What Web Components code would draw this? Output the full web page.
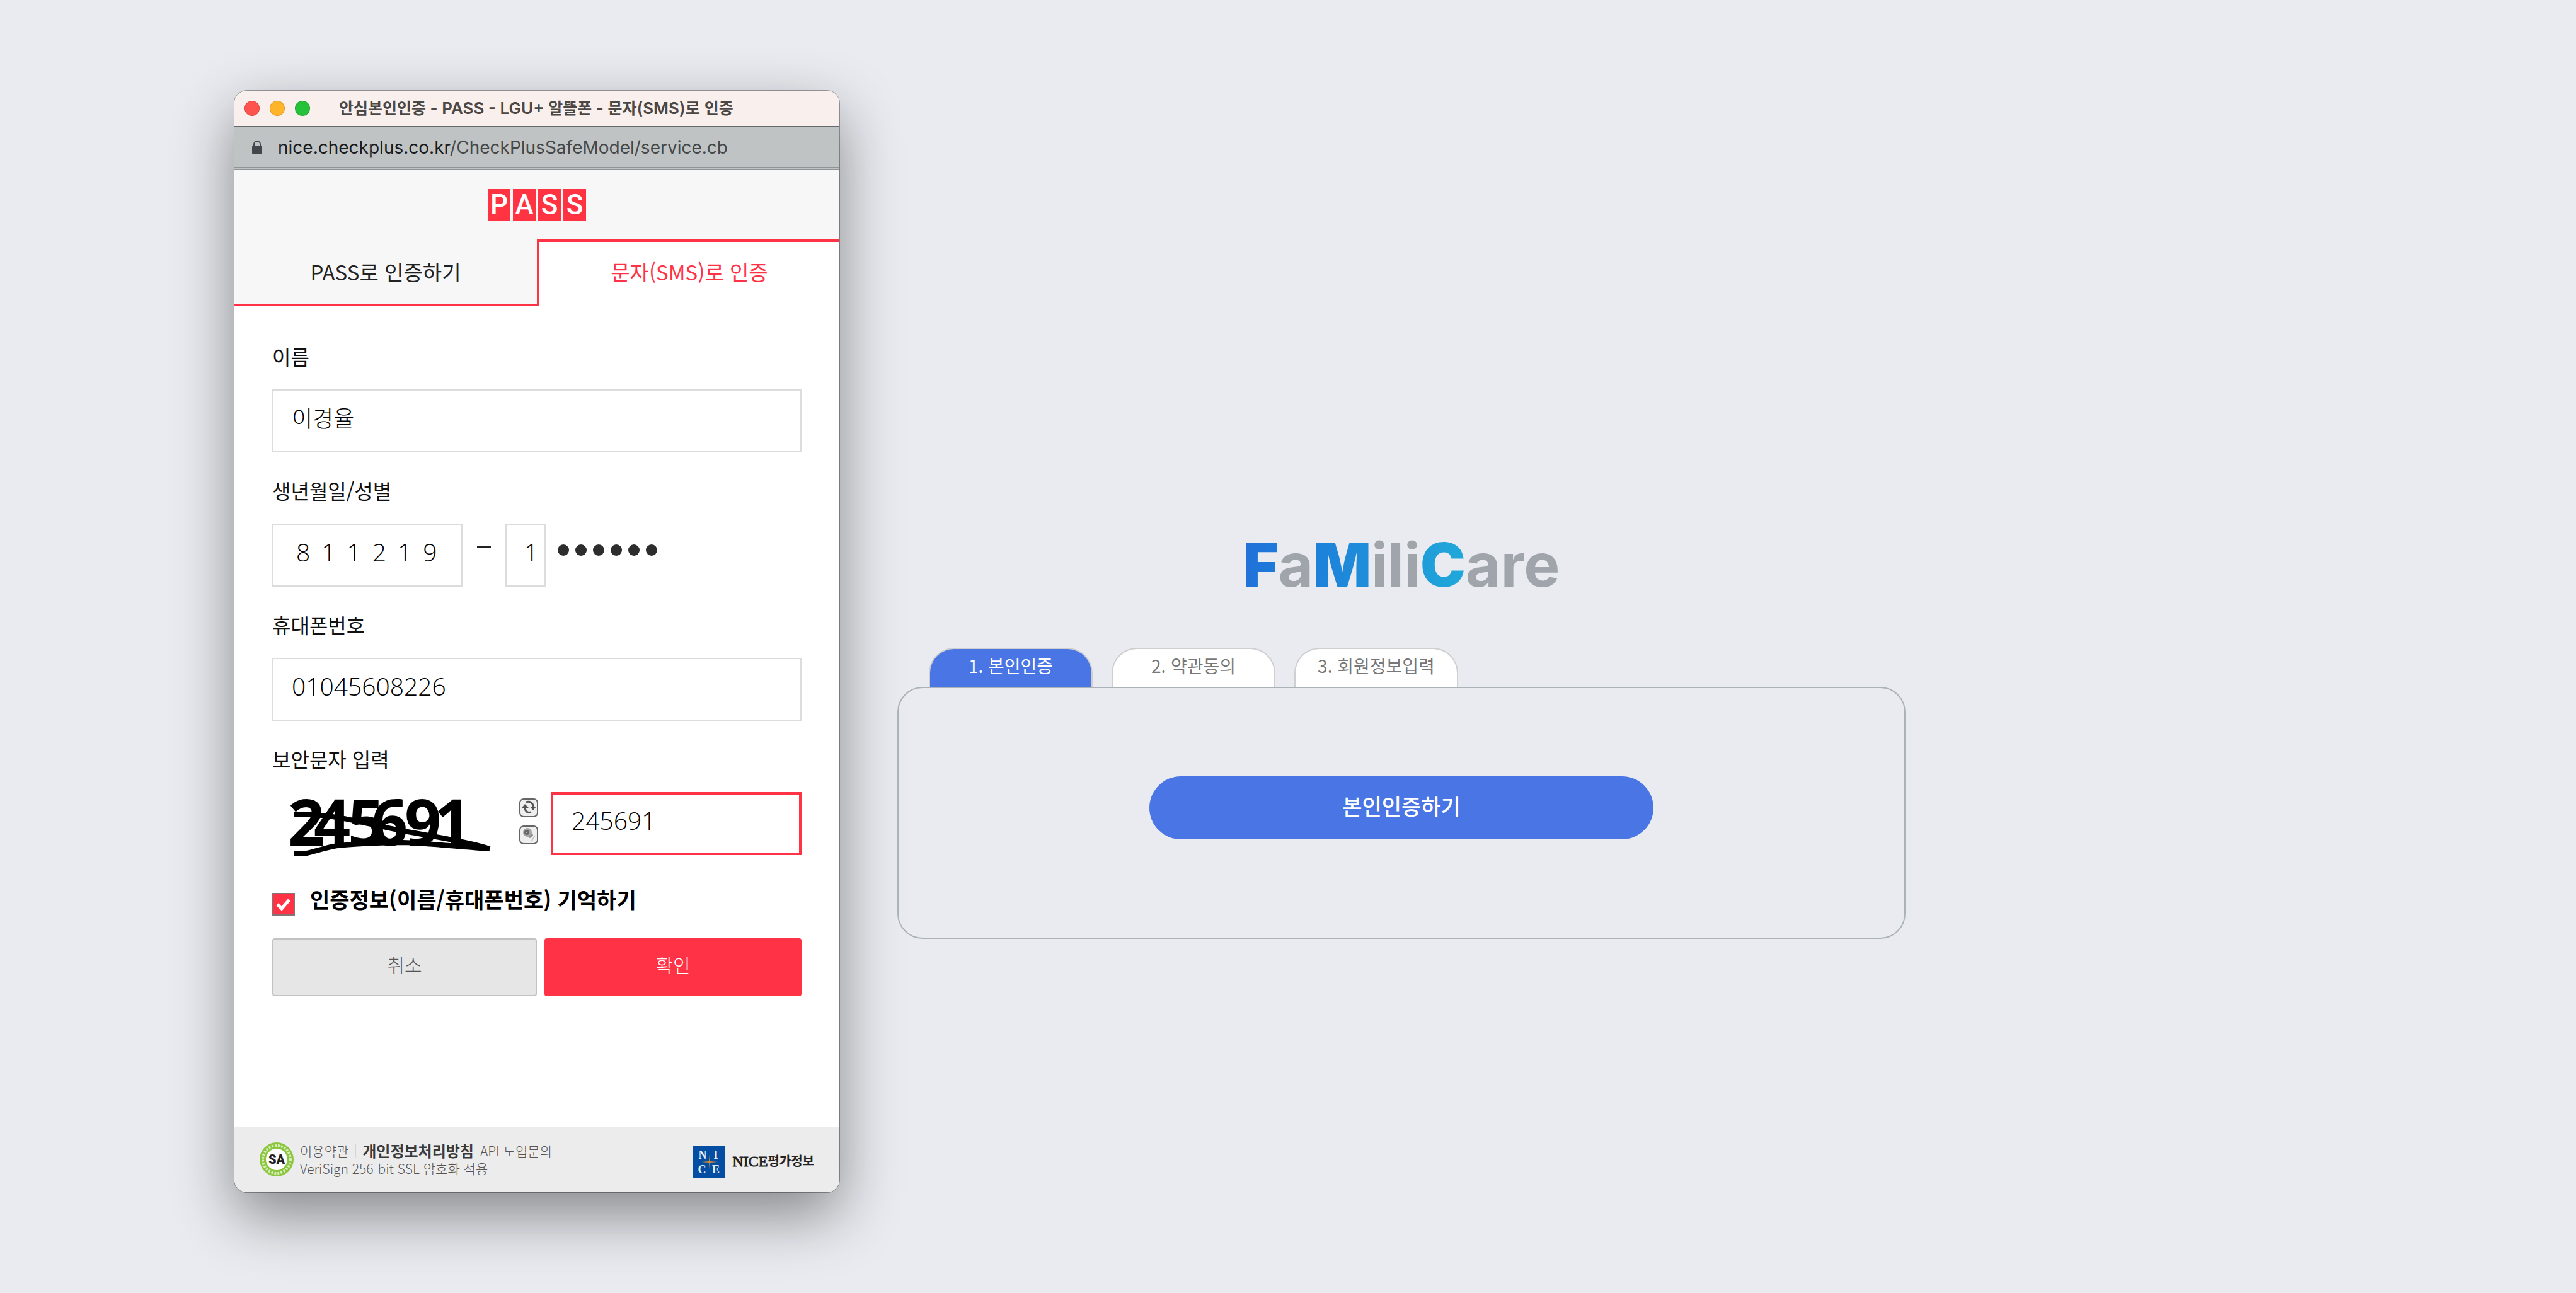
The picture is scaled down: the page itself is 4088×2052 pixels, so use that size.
<!DOCTYPE html>
<html lang="ko">
<head>
<meta charset="utf-8">
<title>FaMiliCare 본인인증</title>
<style>
html,body{margin:0;min-height:100vh}
body{background:#e9ebf0;font-family:"Noto Sans CJK KR","Noto Sans",sans-serif;color:#111;display:flex;flex-direction:column;overflow-x:hidden}
</style>
</head>
<body>
<sign-up-desk></sign-up-desk>
<script>
const define=(name,markup)=>{
  const t=document.createElement('template');
  t.innerHTML=markup;
  customElements.define(name,class extends HTMLElement{
    constructor(){super();this.attachShadow({mode:'open'}).append(t.content.cloneNode(true));}
  });
};

define('traffic-lights',`
<style>
:host{display:flex;gap:16px}
i{width:24px;height:24px;border-radius:50%;box-sizing:border-box;border:1px solid #0002;background:#ff544d}
i:nth-of-type(2){background:#ffb429}
i:nth-of-type(3){background:#25c138}
</style><i></i><i></i><i></i>`);

define('pass-logo',`
<style>
:host{display:flex;gap:4px}
span{width:36px;height:50px;background:#ff3342;color:#fff;text-align:center;font:500 44px/50px Roboto,"Liberation Sans",sans-serif}
</style>
<span>P</span><span>A</span><span>S</span><span>S</span>`);

define('captcha-image',`
<style>:host{display:block}svg{display:block;width:330px;height:90px;overflow:visible}</style>
<svg viewBox="0 0 330 90">
<text font-family="Open Sans,Noto Sans" font-weight="700" font-size="102" x="-2 39 93 130 183 230" y="75">245691</text>
<path d="M8 26C40 25 60 27 81 31C110 36 150 46 188 53S290 70 318 80" fill="none" stroke="#000" stroke-width="8"/>
<path d="M8 87H28C40 84 60 78 71 76C90 73 150 70 181 70C220 71 280 78 318 80" fill="none" stroke="#000" stroke-width="8"/>
</svg>`);

define('captcha-tools',`
<style>
:host{display:flex;flex-direction:column;gap:13px}
button{all:unset;display:block;width:30px;height:30px}
svg{display:block;width:30px;height:30px}
</style>
<button aria-label="새로고침"><svg viewBox="0 0 30 30"><rect x="1" y="1" width="28" height="28" rx="6" fill="#eee" stroke="#666" stroke-width="2"/>
<path d="M11 6C17 4 22 7 22 13M19 22C13 24 9 20 9 14" fill="none" stroke="#555" stroke-width="3"/><path d="M17 13h10l-5 6zM4 15l5-6 6 6z" fill="#555"/></svg></button>
<button aria-label="음성듣기"><svg viewBox="0 0 30 30"><rect x="1" y="1" width="28" height="28" rx="6" fill="#eee" stroke="#666" stroke-width="2"/>
<path d="M12 18q8 0 8-9l2 7-5 4z" fill="#888"/><ellipse cx="13" cy="11" rx="7" ry="7" fill="#a5a5a5"/><circle cx="12" cy="11" r="4" fill="#666"/><circle cx="12" cy="11" r="1" fill="#ddd"/><path d="M19 25l6-9" stroke="#c4cbc4" stroke-width="2"/></svg></button>`);

define('auth-tabs',`
<style>
:host{display:flex;font-size:33px;line-height:48px}
button{all:unset;box-sizing:border-box;flex:1;height:106px;text-align:center}
.off{border-bottom:4px solid #ff3345;flex:0 0 50%;color:#222}
.on{background:#fff;color:#ff3345;border-top:4px solid #ff3345;border-left:4px solid #ff3345;padding-bottom:8px}
</style>
<button class="off">PASS로 인증하기</button><button class="on">문자(SMS)로 인증</button>`);

define('auth-form',`
<style>
:host{display:block;background:#fff;padding:55px 60px 207px}
form{display:flex;flex-direction:column;gap:36px}
.field{display:flex;flex-direction:column;gap:29px}
label{font-size:32px;line-height:48px;color:#111}
input:not([type=checkbox]){box-sizing:border-box;width:100%;height:100px;margin:0;border:2px solid #dcdcdc;border-radius:0;background:#fff;padding:0 29px 12px;font:300 39px "Open Sans","Noto Sans",sans-serif;color:#000;outline:none;min-width:0}
input#name{font:300 36px "Noto Sans CJK KR",sans-serif}
.row{display:flex;align-items:flex-start}
input#birth{width:302px;padding-left:36px;padding-right:0;letter-spacing:18px}
input#sex{width:64px;padding-left:28px;padding-right:0}
.dash{width:22px;height:3px;background:#222;margin:36px 23px 0}
.dots{display:flex;gap:10px;padding:33px 0 0 19px}
.dots i{width:18px;height:18px;border-radius:50%;background:#2d2d2d}
captcha-image{margin:10px 0 0 27px}
captcha-tools{margin:10px 20px 0 35px}
input#captcha{flex:1;border:4px solid #ff3345}
.keep{display:flex;gap:24px;align-items:flex-start;padding-top:10px}
.keep label{font-size:34px;font-weight:700;color:#000}
.keep input{appearance:none;flex:none;margin:14px 0 0;width:36px;height:36px;border:2px solid #857376;background:#ff3345 url('data:image/svg+xml,<svg xmlns="http://www.w3.org/2000/svg" viewBox="0 0 32 32"><path d="M6 16l7 7L25 9" fill="none" stroke="white" stroke-width="5"/></svg>')}
.acts{display:flex;gap:12px}
.acts button{box-sizing:border-box;height:92px;border-radius:4px;font:300 30px "Noto Sans CJK KR",sans-serif;padding:0 0 10px}
.no{flex:0 0 50%;background:#e6e6e6;border:2px solid #c2c2c2;color:#555}
.ok{flex:1;background:#ff3345;border:0;color:#fff}
</style>
<form>
<div class="field"><label for="name">이름</label><input id="name" value="이경율"></div>
<div class="field"><label for="birth">생년월일/성별</label>
<div class="row"><input id="birth" value="811219"><span class="dash"></span><input id="sex" aria-label="성별" value="1"><span class="dots"><i></i><i></i><i></i><i></i><i></i><i></i></span></div></div>
<div class="field"><label for="phone">휴대폰번호</label><input id="phone" value="01045608226"></div>
<div class="field"><label for="captcha">보안문자 입력</label>
<div class="row"><captcha-image></captcha-image><captcha-tools></captcha-tools><input id="captcha" value="245691"></div></div>
<div class="keep"><input type="checkbox" id="keep" checked><label for="keep">인증정보(이름/휴대폰번호) 기억하기</label></div>
<div class="acts"><button type="button" class="no">취소</button><button type="button" class="ok">확인</button></div>
</form>`);

define('auth-footer',`
<style>
:host{display:flex;align-items:flex-start;background:#ececec;height:104px;padding:0 40px;box-sizing:border-box;color:#555;font-size:21px;line-height:28px}
svg{overflow:visible}
.seal{width:54px;height:54px;margin:25px 10px 0 0}
.text{padding-top:24px;flex:1;font-weight:300}
.links{display:flex;align-items:center;gap:10px}
a{color:inherit;text-decoration:none}
a.b{font-weight:700;font-size:24px;color:#3a3a3a}
.bar{width:2px;height:22px;background:#d5d5d5}
.nice{width:50px;height:50px;margin:31px 12px 0 0}
.brand{font:24px/28px "Liberation Serif",serif;color:#222;padding-top:41px;display:flex;-webkit-text-stroke:1px #222}
.brand b{font:700 20px/26px "Noto Sans CJK KR",sans-serif;-webkit-text-stroke:0}
</style>
<svg class="seal" viewBox="0 0 54 54"><circle cx="27" cy="27" r="27" fill="#8cc63f"/><circle cx="27" cy="27" r="22" fill="none" stroke="#d9ecbd" stroke-width="4" stroke-dasharray="3 2"/><circle cx="27" cy="27" r="17" fill="#fff"/><text x="27" y="34" text-anchor="middle" font-family="Roboto,Liberation Sans" font-weight="900" font-size="20" fill="#222">SA</text></svg>
<div class="text"><div class="links"><a href="#">이용약관</a><span class="bar"></span><a href="#" class="b">개인정보처리방침</a><a href="#">API 도입문의</a></div><div>VeriSign 256-bit SSL 암호화 적용</div></div>
<svg class="nice" viewBox="0 0 50 50"><path fill="#034ea2" d="M0 0h50v50H0z"/><g fill="#e4ecf6" font-family="Liberation Serif" font-weight="700" font-size="18" text-anchor="middle"><text x="15" y="20">N</text><text x="36" y="20">I</text><text x="14" y="43">C</text><text x="36" y="43">E</text></g><path fill="#d08a3c" d="M26 13l1 11 12 1-12 1-1 11-1-11-12-1 12-1z"/></svg>
<span class="brand">NICE<b>평가정보</b></span>`);

define('auth-window',`
<style>
:host{display:flex;flex-direction:column;width:960px;border-radius:20px;overflow:hidden;background:#f7f7f7;box-shadow:0 0 0 1px #0005,0 36px 96px #0000006e}
.title{height:56px;background:#f9efec;border-bottom:2px solid #656a6c;display:flex;align-items:center;padding-left:16px;gap:46px;font:600 26px Inter,"Noto Sans CJK KR",sans-serif;color:#4a4744}
.title span{white-space:nowrap;padding-bottom:4px}
.title small{font:700 25px "Noto Sans CJK KR",sans-serif}
.url{height:63px;background:#bfc3c4;display:flex;align-items:center;padding-left:27px;gap:24px;border-bottom:5px double #8f9596;font:400 28px Inter,sans-serif;color:#454849}
.url b{font-weight:400;color:#191b1d}
.url svg{width:18px;height:24px}
pass-logo{align-self:center;margin:30px 0}
</style>
<div class="title"><traffic-lights></traffic-lights><span><small>안심본인인증</small> - PASS - LGU+ <small>알뜰폰</small> - <small>문자</small>(SMS)<small>로 인증</small></span></div>
<div class="url"><svg viewBox="0 0 18 24"><path d="M4 10V7a5 5 0 0 1 10 0v3" fill="none" stroke="#43474d" stroke-width="2"/><rect y="9" x="1" width="16" height="14" rx="2" fill="#43474d"/></svg><span><b>nice.checkplus.co.kr</b>/CheckPlusSafeModel/service.cb</span></div>
<pass-logo></pass-logo>
<auth-tabs></auth-tabs>
<auth-form></auth-form>
<auth-footer></auth-footer>`);

define('famili-logo',`
<style>:host{display:block;font:700 96px/116px Inter,sans-serif;color:#a0a5ab}
b{background:linear-gradient(90deg,#2070d9,#1e7ad9);-webkit-background-clip:text;background-clip:text;color:transparent}
.m{background-image:linear-gradient(90deg,#1d80da,#1f8fd9)}
.c{background-image:linear-gradient(90deg,#1f9cd9,#20a9da)}
</style><b>F</b>a<b class="m">M</b>ili<b class="c">C</b>are`);

define('step-tab',`
<style>
:host{display:block;box-sizing:border-box;width:260px;height:62px;border:2px solid #cfcfcf;border-bottom:0;border-radius:40px 40px 0 0;background:#fff;color:#777;text-align:center;font-size:28px;line-height:40px;padding-top:6px}
:host([current]){background:#4975e5;color:#fff}
</style><slot></slot>`);

define('sign-up',`
<style>
:host{display:flex;flex-direction:column;align-items:center}
nav{display:flex;gap:30px;align-self:flex-start;padding:74px 0 0 50px}
section{box-sizing:border-box;width:100%;border:2px solid #abb3b8;border-radius:40px;padding:140px 24px 156px;display:flex;justify-content:center}
button{width:800px;height:100px;border:0;border-radius:50px;background:#4975e5;color:#fff;font:500 34px "Noto Sans CJK KR",sans-serif;padding:0 0 8px}
</style>
<famili-logo></famili-logo>
<nav><step-tab current>1. 본인인증</step-tab><step-tab>2. 약관동의</step-tab><step-tab>3. 회원정보입력</step-tab></nav>
<section><button>본인인증하기</button></section>`);

define('sign-up-desk',`
<style>
:host{display:flex;align-items:flex-start;gap:92px;padding:144px 40px 0 372px}
auth-window{flex:none}
sign-up{flex:0 1 1600px;margin-top:694px}
</style>
<auth-window></auth-window><sign-up></sign-up>`);
</script>
</body>
</html>
